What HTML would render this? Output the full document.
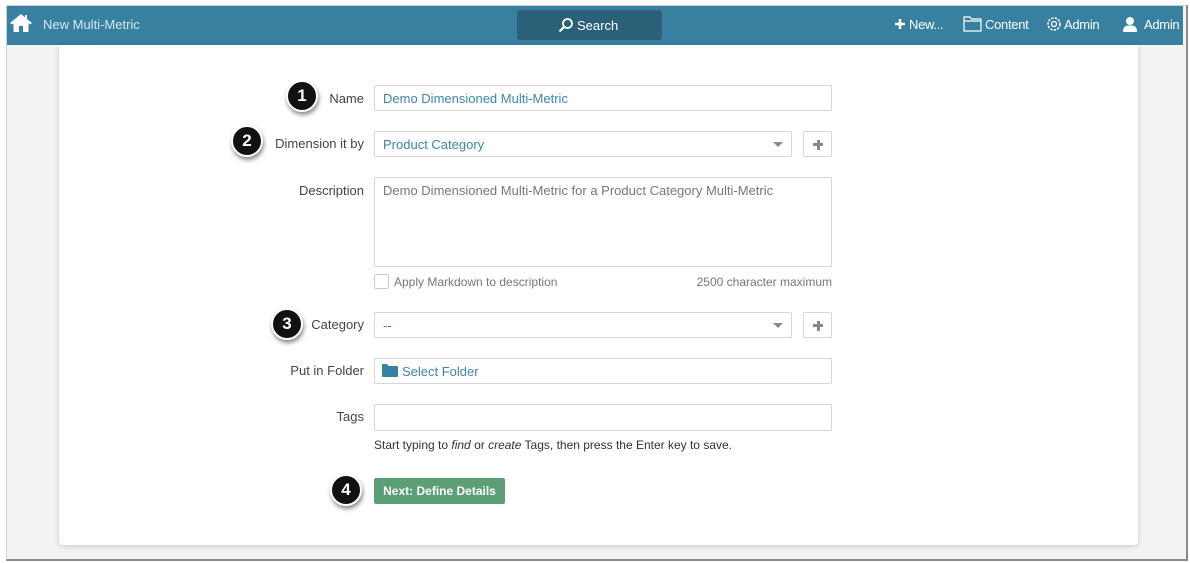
<!DOCTYPE html>
<html><head><style>
*{box-sizing:border-box;margin:0;padding:0}
body{width:1190px;height:563px;background:#fff;font-family:"Liberation Sans",Arial,sans-serif;font-size:13px;color:#333;position:relative;overflow:hidden}
.frame{position:absolute;left:6px;top:5px;width:1182px;height:556px;border:1px solid #d0d0d0;border-right:2px solid #8a8a8a;border-bottom:2px solid #8a8a8a;background:#f3f3f3}
.hdr{position:absolute;left:7px;top:6px;width:1176px;height:39px;background:#37809f}
.card{position:absolute;left:59px;top:45px;width:1079px;height:500px;background:#fff;box-shadow:0 1px 6px rgba(0,0,0,.18);border-radius:0 0 4px 4px}
.a{position:absolute}
.lbl{position:absolute;right:826px;font-size:13px;color:#444;text-align:right}
.in{position:absolute;left:374px;width:458px;height:26px;border:1px solid #d6d6d6;border-radius:2px;background:#fff;padding:5px 8px;color:#3d86a8;font-size:13px}
.plus{position:absolute;left:803px;width:29px;height:26px;border:1px solid #d6d6d6;border-radius:2px;background:#fff}
.plus:before{content:"";position:absolute;left:9px;top:11px;width:10px;height:3px;background:#888}
.plus:after{content:"";position:absolute;left:12.5px;top:7.5px;width:3px;height:10px;background:#888}
.arr{position:absolute;right:8px;top:10px;width:0;height:0;border-left:5px solid transparent;border-right:5px solid transparent;border-top:5px solid #888}
.c{position:absolute;width:32px;height:32px;border-radius:50%;background:#111;border:2px solid #fff;box-shadow:1px 3px 4px rgba(0,0,0,.45);color:#fff;font-size:17px;text-align:center;line-height:28px;font-weight:bold}
.nav{position:absolute;top:17px;color:#fff;font-size:13px}
</style></head><body>
<div class="frame"></div>
<div class="hdr"></div>
<svg class="a" style="left:9px;top:13px" width="24" height="20" viewBox="0 0 24 20"><path d="M12 1 L1 10 L3 11.5 L4.5 10.3 V19 H10 V13 H14 V19 H19.5 V10.3 L21 11.5 L23 10 L18 6 V2 H16 V4.4 Z" fill="#fff"/></svg>
<div class="nav" style="left:43px;color:#d8e8ef">New Multi-Metric</div>
<div class="a" style="left:517px;top:10px;width:145px;height:30px;background:#2a6078;border-radius:3px"></div>
<svg class="a" style="left:558px;top:17px" width="16" height="16" viewBox="0 0 16 16"><circle cx="9.5" cy="6.5" r="4.5" fill="none" stroke="#fff" stroke-width="1.8"/><path d="M6.3 9.7 L1.5 14.5" stroke="#fff" stroke-width="2.2"/></svg>
<div class="nav" style="left:577px;top:18px">Search</div>
<svg class="a" style="left:894px;top:18px" width="12" height="12" viewBox="0 0 12 12"><path d="M6 1 V11 M1 6 H11" stroke="#fff" stroke-width="2.6"/></svg>
<div class="nav" style="left:909px;letter-spacing:-0.3px">New...</div>
<svg class="a" style="left:963px;top:16px" width="19" height="16" viewBox="0 0 19 16"><path d="M1 1 H7 L8.5 3 H18 V15 H1 Z M1 5 H18" fill="none" stroke="#fff" stroke-width="1.2"/></svg>
<div class="nav" style="left:985px;letter-spacing:-0.3px">Content</div>
<svg class="a" style="left:1046px;top:16px" width="16" height="16" viewBox="0 0 16 16"><circle cx="8" cy="8" r="6" fill="none" stroke="#fff" stroke-width="1.5" stroke-dasharray="2.4 1.2"/><circle cx="8" cy="8" r="2.5" fill="none" stroke="#fff" stroke-width="1.3"/></svg>
<div class="nav" style="left:1064px;letter-spacing:-0.3px">Admin</div>
<svg class="a" style="left:1122px;top:16px" width="16" height="16" viewBox="0 0 16 16"><circle cx="8" cy="5" r="4" fill="#fff"/><path d="M1 16 C1 10 4 9.5 8 9.5 C12 9.5 15 10 15 16 Z" fill="#fff"/></svg>
<div class="nav" style="left:1144px;letter-spacing:-0.3px">Admin</div>

<div class="card"></div>

<div class="c" style="left:286px;top:80px">1</div>
<div class="lbl" style="top:91px">Name</div>
<div class="in" style="top:85px">Demo Dimensioned Multi-Metric</div>

<div class="c" style="left:231px;top:125px">2</div>
<div class="lbl" style="top:136px">Dimension it by</div>
<div class="in" style="top:131px;width:418px">Product Category<div class="arr"></div></div>
<div class="plus" style="top:131px"></div>

<div class="lbl" style="top:183px">Description</div>
<div class="in" style="top:177px;height:90px;color:#777">Demo Dimensioned Multi-Metric for a Product Category Multi-Metric</div>
<div class="a" style="left:374px;top:274px;width:15px;height:15px;border:1px solid #ccc;border-radius:2px"></div>
<div class="a" style="left:394px;top:275px;color:#777;font-size:12px">Apply Markdown to description</div>
<div class="a" style="left:632px;width:200px;text-align:right;top:275px;color:#777;font-size:12px">2500 character maximum</div>

<div class="c" style="left:271px;top:308px">3</div>
<div class="lbl" style="top:317px">Category</div>
<div class="in" style="top:312px;width:418px">--<div class="arr"></div></div>
<div class="plus" style="top:312px"></div>

<div class="lbl" style="top:363px">Put in Folder</div>
<div class="in" style="top:358px;padding-left:27px">Select Folder</div>
<svg class="a" style="left:382px;top:364px" width="16" height="13" viewBox="0 0 16 13"><path d="M0 1 Q0 0 1 0 H5 L6.5 2 H15 Q16 2 16 3 V12 Q16 13 15 13 H1 Q0 13 0 12 Z" fill="#37809f"/></svg>

<div class="lbl" style="top:409px">Tags</div>
<div class="in" style="top:404px;height:27px"></div>
<div class="a" style="left:374px;top:438px;font-size:12px;color:#333">Start typing to <i>find</i> or <i>create</i> Tags, then press the Enter key to save.</div>

<div class="c" style="left:330px;top:474px">4</div>
<div class="a" style="left:374px;top:478px;width:131px;height:26px;background:#5c9f77;border-radius:2px;color:#fff;font-weight:bold;font-size:12px;text-align:center;line-height:26px">Next: Define Details</div>
</body></html>
